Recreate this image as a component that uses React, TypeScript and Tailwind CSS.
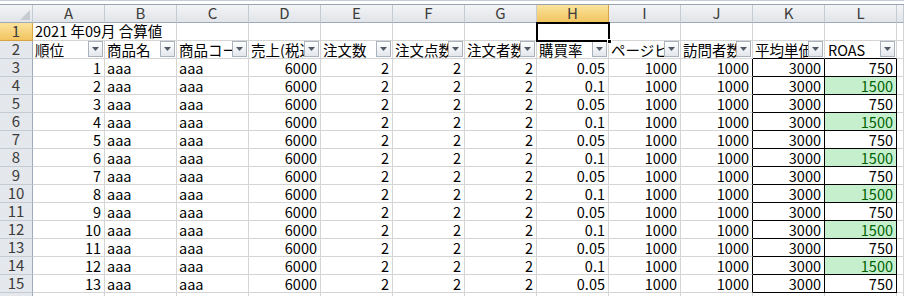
import React from "react";

const COLS = ["A", "B", "C", "D", "E", "F", "G", "H", "I", "J", "K", "L"];
const HEADERS = ["順位", "商品名", "商品コード", "売上(税込)", "注文数", "注文点数", "注文者数", "購買率", "ページビュー", "訪問者数", "平均単価", "ROAS"];

const rows = Array.from({ length: 13 }, (_, i) => ({
  rank: i + 1,
  name: "aaa",
  code: "aaa",
  sales: 6000,
  orders: 2,
  items: 2,
  buyers: 2,
  rate: i % 2 === 0 ? "0.05" : "0.1",
  pv: 1000,
  visitors: 1000,
  avg: 3000,
  roas: i % 2 === 0 ? 750 : 1500,
}));

const grid = "border-r border-b border-[#d4d4d4]";
const colHead = "flex items-center justify-center border-r border-b border-r-[#c5cbd3] border-b-[#9eaab7] bg-gradient-to-b from-[#f3f4f6] to-[#e1e4e8] text-[15px] text-[#3c3c3c]";
const rowHead = "flex items-center justify-center border-r border-b border-r-[#9eaab7] border-b-[#c5cbd3] bg-[#e4e7eb] text-[15px] text-[#3c3c3c]";
const selHead = "bg-gradient-to-b from-[#fae39b] to-[#f2c45f] border-r-[#d9a441] border-b-[#d9a441]";

function FilterButton() {
  return (
    <span className="mb-[1px] mr-[1px] flex h-[16px] w-[15px] shrink-0 items-center justify-center border border-[#aab2bd] bg-gradient-to-b from-white to-[#e3e7ec]">
      <svg width="7" height="4" viewBox="0 0 7 4">
        <polygon points="0,0 7,0 3.5,4" fill="#505a66" />
      </svg>
    </span>
  );
}

function Num({ v, className = "" }: { v: React.ReactNode; className?: string }) {
  return <div className={`flex items-end justify-end pr-[3px] leading-[16px] ${className}`}>{v}</div>;
}

function Txt({ v, className = "" }: { v: React.ReactNode; className?: string }) {
  return <div className={`flex items-end pl-[2px] leading-[16px] ${className}`}>{v}</div>;
}

export default function App() {
  return (
    <div className="h-[296px] w-[904px] overflow-hidden bg-white font-['Noto_Sans_CJK_JP',sans-serif] text-[14.5px] text-black">
      <div className="h-[5px] border-t border-b border-t-[#c8cdd3] border-b-[#9aa3ad] bg-white" />
      <div className="grid grid-cols-[33px_repeat(12,72px)_1fr] auto-rows-[18px]">
        {/* column letters */}
        <div className={`${colHead} relative`}>
          <svg className="absolute bottom-[2px] right-[2px]" width="10" height="10" viewBox="0 0 10 10">
            <polygon points="10,0 10,10 0,10" fill="#c6cbd2" />
          </svg>
        </div>
        {COLS.map((c) => (
          <div key={c} className={`${colHead} ${c === "H" ? selHead : ""}`}>{c}</div>
        ))}
        <div className={colHead} />

        {/* row 1 */}
        <div className={`${rowHead} ${selHead}`}>1</div>
        <div className={`col-span-2 ${grid} relative overflow-visible`}>
          <span className="absolute bottom-[1px] left-[2px] whitespace-nowrap leading-[16px]">2021 年09月 合算値</span>
        </div>
        {COLS.slice(2).map((c) =>
          c === "H" ? (
            <div key={c} className={`${grid} relative`}>
              <div className="absolute -left-[1px] -top-[1px] bottom-[-2px] right-[-2px] border-2 border-black" />
              <div className="absolute bottom-[-4px] right-[-4px] h-[5px] w-[5px] border border-white bg-black" />
            </div>
          ) : (
            <div key={c} className={grid} />
          )
        )}
        <div className={grid} />

        {/* row 2 headers */}
        <div className={rowHead}>2</div>
        {HEADERS.map((h, i) => (
          <div key={h} className={`flex items-end overflow-hidden ${grid} ${i >= 10 ? "border-b-black" : ""} ${i === 11 ? "pl-[3px]" : "pl-[2px]"}`}>
            <span className="min-w-0 flex-1 overflow-hidden whitespace-nowrap leading-[17px]">{h}</span>
            <FilterButton />
          </div>
        ))}
        <div className={grid} />

        {/* data rows */}
        {rows.map((r, i) => (
          <React.Fragment key={i}>
            <div className={rowHead}>{i + 3}</div>
            <Num v={r.rank} className={grid} />
            <Txt v={r.name} className={grid} />
            <Txt v={r.code} className={grid} />
            <Num v={r.sales} className={grid} />
            <Num v={r.orders} className={grid} />
            <Num v={r.items} className={grid} />
            <Num v={r.buyers} className={grid} />
            <Num v={r.rate} className={grid} />
            <Num v={r.pv} className={grid} />
            <Num v={r.visitors} className={`${grid} border-r-black`} />
            <Num v={r.avg} className="border-r border-b border-black" />
            <Num
              v={r.roas}
              className={`border-r border-b border-black ${r.roas === 1500 ? "bg-[#c6efce] text-[#006100]" : ""}`}
            />
            <div className={grid} />
          </React.Fragment>
        ))}
        <div className={rowHead}>16</div>
        {COLS.map((c) => (
          <div key={c} className={grid} />
        ))}
        <div className={grid} />
      </div>
    </div>
  );
}
